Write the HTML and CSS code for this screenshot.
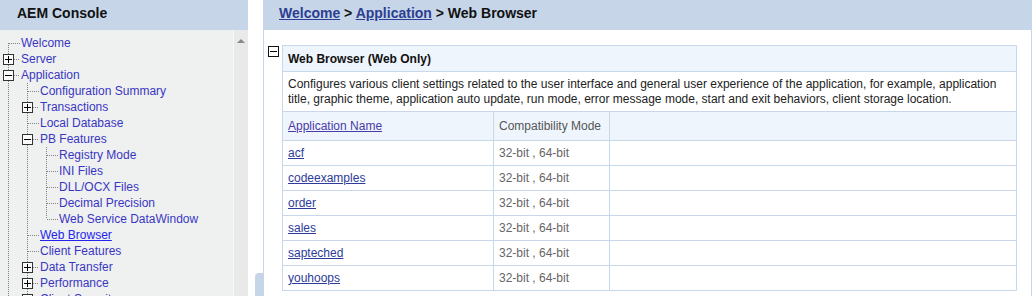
FILE: index.html
```html
<!DOCTYPE html>
<html lang="en">
<head>
    <meta charset="UTF-8">
    <meta name="viewport" content="width=device-width, initial-scale=1.0">
    <title>AEM Console - Web Browser</title>
    <link rel="stylesheet" href="styles.css">
</head>
<body>
    <div class="console">
        <aside class="nav">
            <div class="nav-head">AEM Console</div>
            <div class="nav-body">
                <div class="tree-wrap">
                    <ul class="tree">
                        <li class="first"><div class="row"><span class="hline"></span><a href="#">Welcome</a></div></li>
                        <li><div class="row">
                            <svg class="box" width="11" height="11"><rect x=".5" y=".5" width="10" height="10" fill="#fafafa" stroke="#333"/><path d="M2 5.5h7M5.5 2v7" stroke="#000"/></svg>
                            <span class="hline short"></span><a href="#">Server</a></div></li>
                        <li><div class="row">
                            <svg class="box" width="11" height="11"><rect x=".5" y=".5" width="10" height="10" fill="#fafafa" stroke="#333"/><path d="M2 5.5h7" stroke="#000"/></svg>
                            <span class="hline short"></span><a href="#">Application</a></div>
                            <ul>
                                <li><div class="row"><span class="hline"></span><a href="#">Configuration Summary</a></div></li>
                                <li><div class="row">
                                    <svg class="box" width="11" height="11"><rect x=".5" y=".5" width="10" height="10" fill="#fafafa" stroke="#333"/><path d="M2 5.5h7M5.5 2v7" stroke="#000"/></svg>
                                    <span class="hline short"></span><a href="#">Transactions</a></div></li>
                                <li><div class="row"><span class="hline"></span><a href="#">Local Database</a></div></li>
                                <li><div class="row">
                                    <svg class="box" width="11" height="11"><rect x=".5" y=".5" width="10" height="10" fill="#fafafa" stroke="#333"/><path d="M2 5.5h7" stroke="#000"/></svg>
                                    <span class="hline short"></span><a href="#">PB Features</a></div>
                                    <ul>
                                        <li><div class="row"><span class="hline"></span><a href="#">Registry Mode</a></div></li>
                                        <li><div class="row"><span class="hline"></span><a href="#">INI Files</a></div></li>
                                        <li><div class="row"><span class="hline"></span><a href="#">DLL/OCX Files</a></div></li>
                                        <li><div class="row"><span class="hline"></span><a href="#">Decimal Precision</a></div></li>
                                        <li class="last"><div class="row"><span class="hline"></span><a href="#">Web Service DataWindow</a></div></li>
                                    </ul>
                                </li>
                                <li><div class="row"><span class="hline"></span><a href="#" class="current">Web Browser</a></div></li>
                                <li><div class="row"><span class="hline"></span><a href="#">Client Features</a></div></li>
                                <li><div class="row">
                                    <svg class="box" width="11" height="11"><rect x=".5" y=".5" width="10" height="10" fill="#fafafa" stroke="#333"/><path d="M2 5.5h7M5.5 2v7" stroke="#000"/></svg>
                                    <span class="hline short"></span><a href="#">Data Transfer</a></div></li>
                                <li><div class="row">
                                    <svg class="box" width="11" height="11"><rect x=".5" y=".5" width="10" height="10" fill="#fafafa" stroke="#333"/><path d="M2 5.5h7M5.5 2v7" stroke="#000"/></svg>
                                    <span class="hline short"></span><a href="#">Performance</a></div></li>
                                <li><div class="row">
                                    <svg class="box" width="11" height="11"><rect x=".5" y=".5" width="10" height="10" fill="#fafafa" stroke="#333"/><path d="M2 5.5h7M5.5 2v7" stroke="#000"/></svg>
                                    <span class="hline short"></span><a href="#">Client Security</a></div></li>
                            </ul>
                        </li>
                    </ul>
                </div>
                <div class="scrollbar"><span class="arrow-up"></span></div>
            </div>
        </aside>

        <div class="splitter"><span class="handle"></span></div>

        <main class="content">
            <div class="crumbs">
                <a href="#">Welcome</a> &gt; <a href="#">Application</a> &gt; Web Browser
            </div>
            <div class="content-body">
                <svg class="toggle" width="11" height="11"><rect x=".5" y=".5" width="10" height="10" fill="#fff" stroke="#111"/><path d="M2 5.5h7" stroke="#000"/></svg>
                <table class="grid">
                    <tr class="title-row"><th colspan="3">Web Browser (Web Only)</th></tr>
                    <tr class="desc-row"><td colspan="3">Configures various client settings related to the user interface and general user experience of the application, for example, application title, graphic theme, application auto update, run mode, error message mode, start and exit behaviors, client storage location.</td></tr>
                    <tr class="head-row">
                        <td class="col-name"><a href="#">Application Name</a></td>
                        <td class="col-mode">Compatibility Mode</td>
                        <td></td>
                    </tr>
                    <tr><td><a href="#">acf</a></td><td class="mode">32-bit , 64-bit</td><td></td></tr>
                    <tr><td><a href="#">codeexamples</a></td><td class="mode">32-bit , 64-bit</td><td></td></tr>
                    <tr><td><a href="#">order</a></td><td class="mode">32-bit , 64-bit</td><td></td></tr>
                    <tr><td><a href="#">sales</a></td><td class="mode">32-bit , 64-bit</td><td></td></tr>
                    <tr><td><a href="#">sapteched</a></td><td class="mode">32-bit , 64-bit</td><td></td></tr>
                    <tr><td><a href="#">youhoops</a></td><td class="mode">32-bit , 64-bit</td><td></td></tr>
                </table>
            </div>
        </main>
    </div>
</body>
</html>
```

FILE: styles.css
```css
body {
    margin: 0;
    padding: 0;
    background-color: #ffffff;
    font-family: "Liberation Sans", Arial, sans-serif;
    font-size: 12px;
    overflow: hidden;
}
.console {
    display: flex;
    height: 296px;
}

/* left navigation */
.nav {
    width: 248px;
    display: flex;
    flex-direction: column;
}
.nav-head {
    height: 30px;
    line-height: 27px;
    padding-left: 17px;
    background-color: #c6d6e8;
    font-size: 14px;
    font-weight: bold;
    color: #111;
}
.nav-body {
    flex: 1;
    display: flex;
    background-color: #eff1f0;
    overflow: hidden;
}
.tree-wrap {
    flex: 1;
    padding-top: 5px;
}
.scrollbar {
    width: 15px;
    background-color: #e9e9e9;
    border-left: 1px solid #f7f7f7;
    display: flex;
    justify-content: center;
    padding-top: 9px;
    box-sizing: border-box;
}
.arrow-up {
    width: 0;
    height: 0;
    border-left: 4px solid transparent;
    border-right: 4px solid transparent;
    border-bottom: 4px solid #8a8a8a;
}

/* tree */
.tree,
.tree ul {
    list-style: none;
    margin: 0;
    padding: 0;
}
.tree {
    padding-left: 8px;
}
.tree ul {
    margin-left: 18px;
}
.tree li {
    padding-left: 1px;
    background: repeating-linear-gradient(to bottom, #808080 0 1px, transparent 1px 2px) 0 0 / 1px 100% no-repeat;
}
.tree li.first {
    background-position: 0 8px;
}
.tree li.last {
    background-size: 1px 8px;
}
.row {
    height: 16px;
    display: flex;
    align-items: center;
    white-space: nowrap;
}
.hline {
    width: 11px;
    height: 1px;
    background: repeating-linear-gradient(to right, #808080 0 1px, transparent 1px 2px);
}
.hline.short {
    width: 6px;
}
.box {
    margin-left: -6px;
    flex: none;
}
.row a {
    margin-left: 1px;
    color: #3a36c4;
    text-decoration: none;
}
.row a.current {
    color: #2424ee;
    text-decoration: underline;
}

/* splitter between panels */
.splitter {
    width: 15px;
    display: flex;
    flex-direction: column;
}
.handle {
    margin-top: 273px;
    margin-left: 7px;
    width: 8px;
    height: 30px;
    background-color: #c6d6e8;
    border-top-left-radius: 4px;
}

/* right content */
.content {
    width: 767px;
    border-left: 1px solid #c6d6e8;
    border-right: 1px solid #c6d6e8;
}
.crumbs {
    height: 30px;
    line-height: 27px;
    padding-left: 15px;
    background-color: #c6d6e8;
    font-size: 14px;
    font-weight: bold;
    color: #111;
}
.crumbs a {
    color: #2c3d92;
}
.content-body {
    display: flex;
    align-items: flex-start;
    padding: 15px 0 0 4px;
}
.toggle {
    flex: none;
    margin-top: 1px;
    margin-right: 3px;
}
.grid {
    width: 735px;
    border-collapse: collapse;
    border: 1px solid #c8d7e9;
}
.grid th,
.grid td {
    border: 1px solid #c8d7e9;
    padding: 0 5px;
    text-align: left;
    color: #222;
}
.grid td {
    height: 24px;
}
.title-row th {
    height: 25px;
    background-color: #eff5fd;
    font-weight: bold;
    color: #111;
}
.grid .desc-row td {
    height: auto;
    padding: 5px 5px 4px;
    line-height: 15px;
}
.grid .head-row td {
    height: 28px;
    background-color: #eff5fd;
}
.col-name {
    width: 200px;
}
.grid .col-mode {
    width: 105px;
    color: #555;
}
.grid a {
    color: #2d3b9a;
}
.grid .head-row a {
    color: #4a3aa8;
}
.grid .mode {
    color: #666;
}
```
